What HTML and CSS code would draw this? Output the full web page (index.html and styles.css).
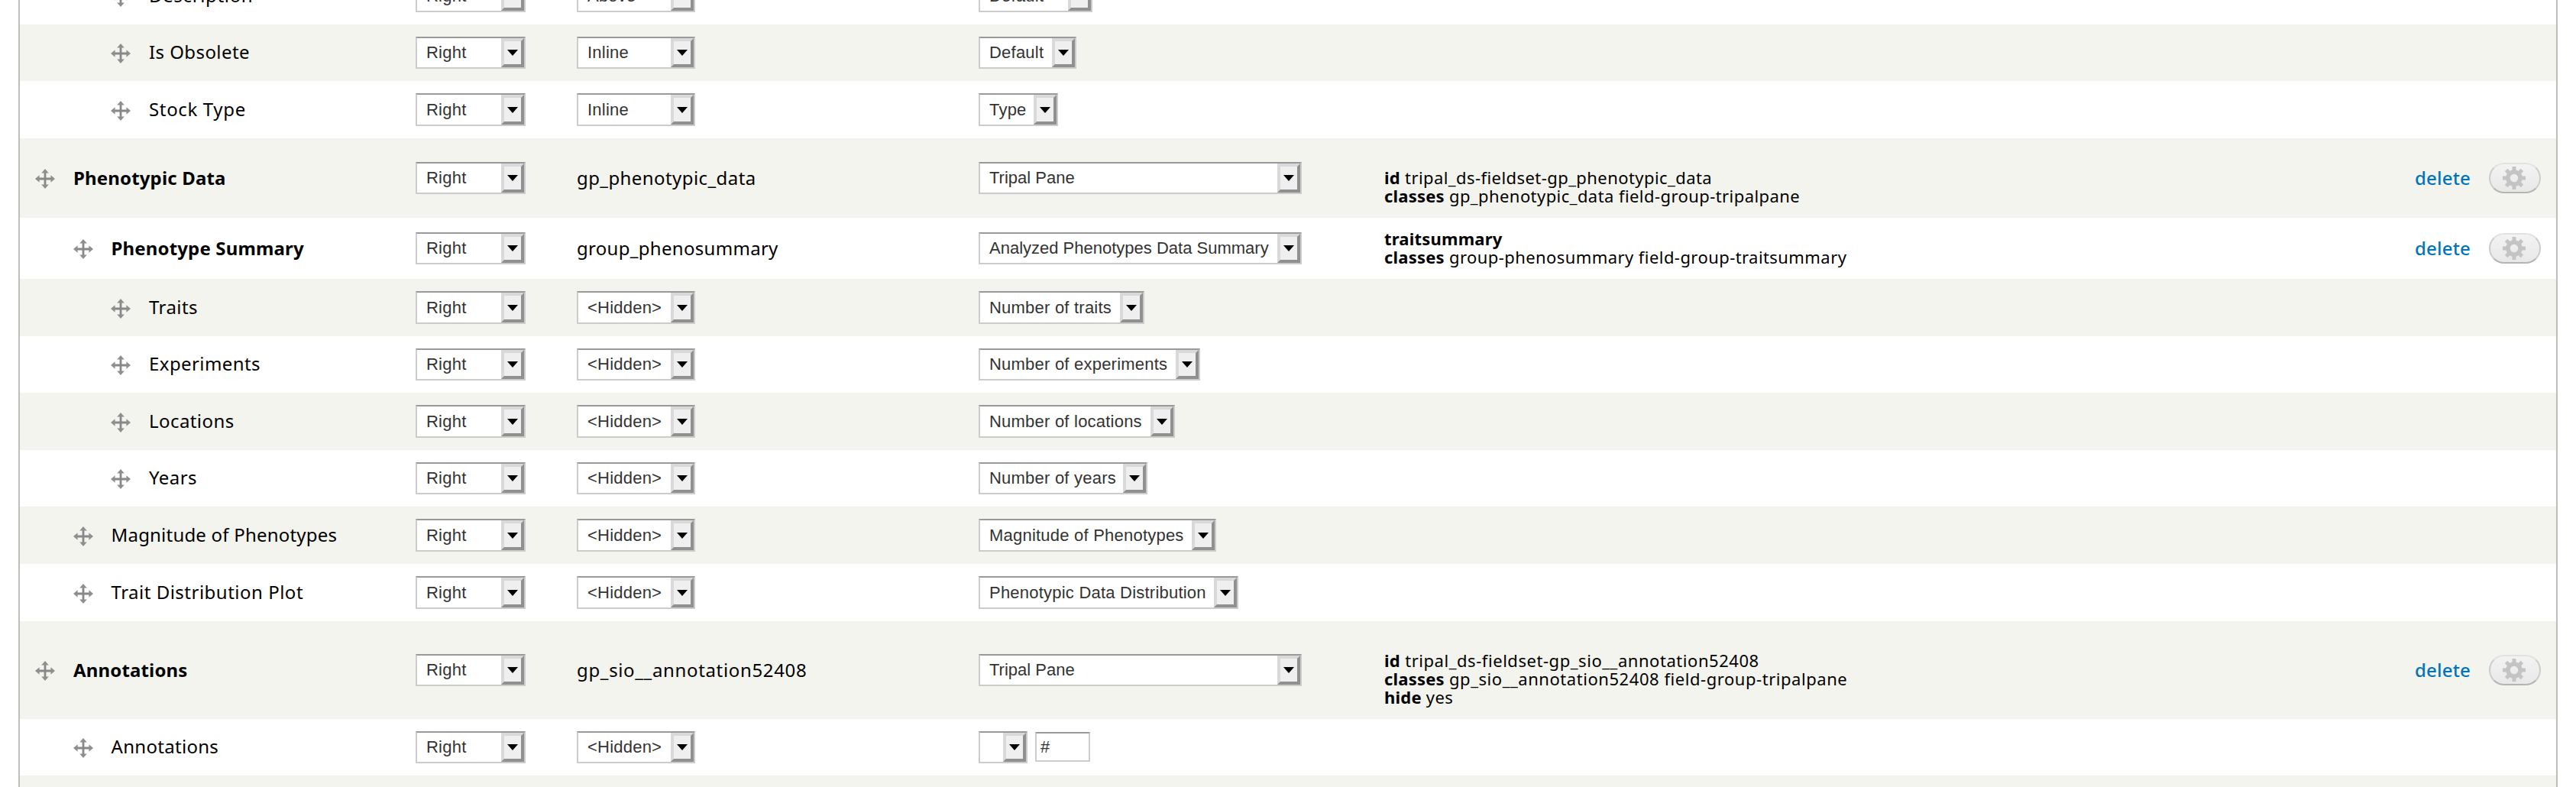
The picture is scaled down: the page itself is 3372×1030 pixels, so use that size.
FILE: index.html
```html
<!DOCTYPE html>
<html lang="en">
<head>
<meta charset="utf-8">
<title>Manage display</title>
<link rel="stylesheet" href="styles.css">
</head>
<body>
<svg class="defs" aria-hidden="true">
  <symbol id="move" viewBox="0 0 26 26">
    <path d="M13 3V23M3 13H23" stroke="#888" stroke-width="2.8" fill="none"/>
    <path d="M13 0L17.8 5.6H8.2ZM13 26L17.8 20.4H8.2ZM0 13L5.6 8.2V17.8ZM26 13L20.4 8.2V17.8Z" fill="#8f8f8f"/>
  </symbol>
  <symbol id="gear" viewBox="0 0 30 30">
    <circle cx="15" cy="15" r="8" fill="none" stroke="#c4c4c4" stroke-width="5.6"/>
    <path d="M15 0V6M15 24V30M0 15H6M24 15H30M4.6 4.6L8.8 8.8M21.2 21.2L25.4 25.4M4.6 25.4L8.8 21.2M21.2 8.8L25.4 4.6" stroke="#c4c4c4" stroke-width="5"/>
  </symbol>
</svg>
<main class="overview">
  <div class="row first">
    <div class="name l3"><svg class="move"><use href="#move"/></svg><span class="s6">Description</span></div>
    <div><span class="select region">Right<i></i></span></div>
    <div><span class="select label">Above<i></i></span></div>
    <div><span class="select w-description">Default<i></i></span></div>
  </div>
  <div class="row odd">
    <div class="name l3"><svg class="move"><use href="#move"/></svg><span class="s4">Is Obsolete</span></div>
    <div><span class="select region">Right<i></i></span></div>
    <div><span class="select label">Inline<i></i></span></div>
    <div><span class="select w-default">Default<i></i></span></div>
  </div>
  <div class="row tall">
    <div class="name l3"><svg class="move"><use href="#move"/></svg><span class="s6">Stock Type</span></div>
    <div><span class="select region">Right<i></i></span></div>
    <div><span class="select label">Inline<i></i></span></div>
    <div><span class="select w-type">Type<i></i></span></div>
  </div>
  <div class="row odd group lines3">
    <div class="name"><svg class="move"><use href="#move"/></svg><b>Phenotypic Data</b></div>
    <div><span class="select region">Right<i></i></span></div>
    <div class="machine s4">gp_phenotypic_data</div>
    <div><span class="select format">Tripal Pane<i></i></span></div>
    <div class="summary blank"><p><b>id</b> tripal_ds-fieldset-gp_phenotypic_data</p><p><b>classes</b> gp_phenotypic_data field-group-tripalpane</p></div>
    <a class="delete">delete</a>
    <span class="settings"><svg><use href="#gear"/></svg></span>
  </div>
  <div class="row group lines2">
    <div class="name l2"><svg class="move"><use href="#move"/></svg><b>Phenotype Summary</b></div>
    <div><span class="select region">Right<i></i></span></div>
    <div class="machine s3">group_phenosummary</div>
    <div><span class="select format">Analyzed Phenotypes Data Summary<i></i></span></div>
    <div class="summary"><p><b>traitsummary</b></p><p><b>classes</b> group-phenosummary field-group-traitsummary</p></div>
    <a class="delete">delete</a>
    <span class="settings"><svg><use href="#gear"/></svg></span>
  </div>
  <div class="row odd tall">
    <div class="name l3"><svg class="move"><use href="#move"/></svg><span class="s4">Traits</span></div>
    <div><span class="select region">Right<i></i></span></div>
    <div><span class="select label">&lt;Hidden&gt;<i></i></span></div>
    <div><span class="select w-traits">Number of traits<i></i></span></div>
  </div>
  <div class="row">
    <div class="name l3"><svg class="move"><use href="#move"/></svg><span class="s4">Experiments</span></div>
    <div><span class="select region">Right<i></i></span></div>
    <div><span class="select label">&lt;Hidden&gt;<i></i></span></div>
    <div><span class="select w-experiments">Number of experiments<i></i></span></div>
  </div>
  <div class="row odd tall">
    <div class="name l3"><svg class="move"><use href="#move"/></svg><span class="s4">Locations</span></div>
    <div><span class="select region">Right<i></i></span></div>
    <div><span class="select label">&lt;Hidden&gt;<i></i></span></div>
    <div><span class="select w-locations">Number of locations<i></i></span></div>
  </div>
  <div class="row">
    <div class="name l3"><svg class="move"><use href="#move"/></svg><span class="s4">Years</span></div>
    <div><span class="select region">Right<i></i></span></div>
    <div><span class="select label">&lt;Hidden&gt;<i></i></span></div>
    <div><span class="select w-years">Number of years<i></i></span></div>
  </div>
  <div class="row odd tall">
    <div class="name l2"><svg class="move"><use href="#move"/></svg><span class="s2">Magnitude of Phenotypes</span></div>
    <div><span class="select region">Right<i></i></span></div>
    <div><span class="select label">&lt;Hidden&gt;<i></i></span></div>
    <div><span class="select w-magnitude">Magnitude of Phenotypes<i></i></span></div>
  </div>
  <div class="row tall">
    <div class="name l2"><svg class="move"><use href="#move"/></svg><span class="s5">Trait Distribution Plot</span></div>
    <div><span class="select region">Right<i></i></span></div>
    <div><span class="select label">&lt;Hidden&gt;<i></i></span></div>
    <div><span class="select w-distribution">Phenotypic Data Distribution<i></i></span></div>
  </div>
  <div class="row odd group lines4">
    <div class="name"><svg class="move"><use href="#move"/></svg><b>Annotations</b></div>
    <div><span class="select region">Right<i></i></span></div>
    <div class="machine s6">gp_sio__annotation52408</div>
    <div><span class="select format">Tripal Pane<i></i></span></div>
    <div class="summary blank"><p class="wide"><b>id</b> tripal_ds-fieldset-gp_sio__annotation52408</p><p class="wide"><b>classes</b> gp_sio__annotation52408 field-group-tripalpane</p><p><b>hide</b> yes</p></div>
    <a class="delete">delete</a>
    <span class="settings"><svg><use href="#gear"/></svg></span>
  </div>
  <div class="row">
    <div class="name l2"><svg class="move"><use href="#move"/></svg><span class="s3">Annotations</span></div>
    <div><span class="select region">Right<i></i></span></div>
    <div><span class="select label">&lt;Hidden&gt;<i></i></span></div>
    <div class="pair"><span class="select w-empty"><i></i></span><span class="text-field">#</span></div>
  </div>
  <div class="row odd"></div>
</main>
</body>
</html>
```
FILE: styles.css
```css
* { box-sizing: border-box; }

body {
  margin: 0;
  height: 1030px;
  overflow: hidden;
  background: #fff;
  color: #000;
  font: 24px/30px "Noto Sans", sans-serif;
}

.defs { display: none; }

.overview {
  width: 3324px;
  height: 1030px;
  margin-left: 24px;
  border: solid #bebfb9;
  border-width: 0 2px;
  overflow: hidden;
}

.row {
  display: grid;
  grid-template-columns: 518px 211px 526px 531px 1349px 97px 1fr;
  align-items: center;
  height: 74px;
  background: #fff;
}
.row.first { margin-top: -42px; }
.row.tall { height: 75px; }
.row.lines2 { height: 80px; }
.row.lines3 { height: 104px; }
.row.lines4 { height: 128px; }
.row.odd { background: #f3f4ee; }
.row > div { white-space: nowrap; }

.name {
  display: flex;
  align-items: center;
  gap: 24px;
  padding-left: 20px;
}
.name.l2 { padding-left: 69.5px; }
.name.l3 { padding-left: 119px; }
.name span { padding-bottom: 2px; }
.name b { font-weight: 700; letter-spacing: .15px; }
.move { flex: none; width: 26px; height: 26px; margin-top: 2px; }

.s2 { letter-spacing: .2px; }
.s3 { letter-spacing: .3px; }
.s4 { letter-spacing: .42px; }
.s5 { letter-spacing: .5px; }
.s6 { letter-spacing: .65px; }

.select {
  display: flex;
  align-items: center;
  justify-content: space-between;
  height: 42px;
  padding-left: 12px;
  border: 2px solid #ccc;
  border-top-color: #999;
  background: #fff;
  color: #333;
  font: 22px/26px "Liberation Sans", sans-serif;
  letter-spacing: .22px;
}
.tall .select { height: 43px; }
.select i {
  flex: none;
  display: flex;
  align-items: center;
  justify-content: center;
  width: 30px;
  height: 100%;
  margin-left: auto;
  border: 4px solid;
  border-color: #d9d9d9 #909090 #909090 #d9d9d9;
  background: #efefef;
}
.select i::before {
  content: "";
  border: solid transparent;
  border-width: 8px 7px 0;
  border-top-color: #000;
}

.region { width: 144px; }
.label { width: 155px; }
.format { width: 423px; letter-spacing: 0; }
.w-description { width: 149px; }
.w-default { width: 128px; }
.w-type { width: 104px; }
.w-traits { width: 217px; }
.w-experiments { width: 290px; }
.w-locations { width: 257px; }
.w-years { width: 221px; }
.w-magnitude { width: 311px; }
.w-distribution { width: 340px; }
.w-empty { width: 64px; }

.pair { display: flex; gap: 10px; }
.text-field {
  width: 72px;
  height: 39px;
  margin-top: 1px;
  padding-left: 5px;
  border: 2px solid #ccc;
  border-top-color: #999;
  background: #fff;
  color: #333;
  font: 22px/35px "Liberation Sans", sans-serif;
}

.summary { font-size: 22px; line-height: 24px; letter-spacing: .43px; padding-bottom: 2px; }
.summary.blank { padding-top: 24px; }
.summary p { margin: 0; }
.summary .wide { letter-spacing: .55px; }
.summary b { letter-spacing: .2px; }

.delete { color: #0074bd; font-weight: 500; letter-spacing: .2px; }

.settings {
  display: flex;
  align-items: center;
  justify-content: center;
  width: 68px;
  height: 40px;
  border: 2px solid #ccc;
  border-top-color: #e2e2e2;
  border-bottom-color: #b4b4b4;
  border-radius: 20px;
  background: linear-gradient(#f3f3f3, #e8e8e8);
}
.settings svg { width: 30px; height: 30px; margin-right: 2px; }
```
